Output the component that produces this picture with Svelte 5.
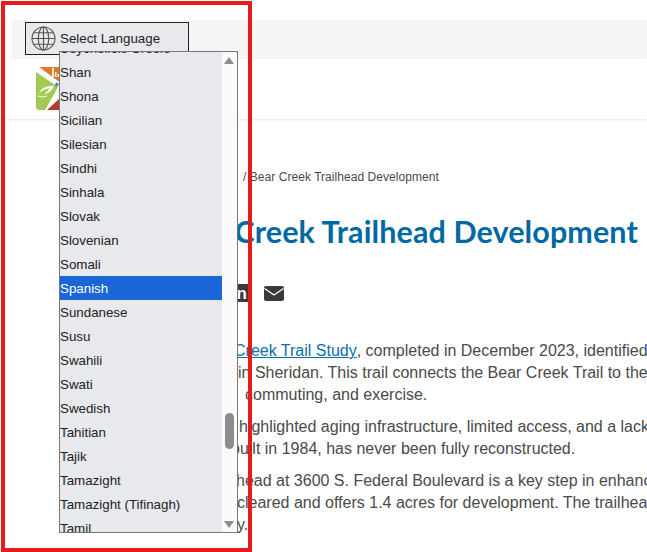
<script lang="ts">
  const languages = [
    'Seychellois Creole', 'Shan', 'Shona', 'Sicilian', 'Silesian', 'Sindhi', 'Sinhala',
    'Slovak', 'Slovenian', 'Somali', 'Spanish', 'Sundanese', 'Susu', 'Swahili', 'Swati',
    'Swedish', 'Tahitian', 'Tajik', 'Tamazight', 'Tamazight (Tifinagh)', 'Tamil'
  ];
  let selected = $state('Spanish');

  // x = where the visible part of the line starts, the lead part runs under the open list
  const contentLeft = 64;
  const paragraphs = [
    [
      { x: 234, lead: 'The Bear ', link: 'Creek Trail Study', text: ', completed in December 2023, identified the need' },
      { x: 238, lead: 'a trailhead ', text: 'in Sheridan. This trail connects the Bear Creek Trail to the regional network' },
      { x: 245, lead: '', text: 'commuting, and exercise.' }
    ],
    [
      { x: 239, lead: 'The study ', text: 'highlighted aging infrastructure, limited access, and a lack of amenities' },
      { x: 231, lead: 'The site, ', text: 'built in 1984, has never been fully reconstructed.' }
    ],
    [
      { x: 236, lead: 'A new trail', text: 'head at 3600 S. Federal Boulevard is a key step in enhancing access' },
      { x: 237, lead: 'The site is ', text: 'cleared and offers 1.4 acres for development. The trailhead will serve' },
      { x: 237, lead: 'communit', text: 'y.' }
    ]
  ];
</script>

<div class="page">
  <div class="topbar">
    <div class="lang">
      <button class="lang-btn">
        <svg class="globe" viewBox="0 0 24 24" width="25" height="25" fill="none" stroke="#555" stroke-width="1.1">
          <circle cx="12" cy="12" r="11" />
          <ellipse cx="12" cy="12" rx="5" ry="11" />
          <path d="M12 1v22M1 12h22M2.6 6.5h18.8M2.6 17.5h18.8" />
        </svg>
        <span>Select Language</span>
      </button>
      <div class="dropdown">
        <ul class="options">
          {#each languages as lang}
            <li class:active={lang === selected}>{lang}</li>
          {/each}
        </ul>
        <div class="scrollbar">
          <span class="arrow up"></span>
          <span class="thumb"></span>
          <span class="arrow down"></span>
        </div>
      </div>
    </div>
  </div>

  <header class="site-header">
    <svg class="logo" viewBox="0 0 30 43" width="30" height="43">
      <path d="M3 0H30V20Z" fill="#e07b2c" />
      <path d="M16 1h2v9h-2zM19 5h1.500v5H19zM21.500 7H23v3h-1.500z" fill="#fff" opacity="0.85" />
      <path d="M0 5L22 20 9 43H3Q0 43 0 40Z" fill="#a3c854" />
      <path d="M20 15l3 2-2 3-2-2z" fill="#2f8fc4" />
      <path d="M11 43L23 32 30 38V43Z" fill="#b8392e" />
      <path d="M3 26Q7 18 18 19 15 26 8 27 12 24 14 21 8 22 3 26Z" fill="#fff" />
      <path d="M2 29Q6 31 11 29" fill="none" stroke="#fff" stroke-width="1" />
    </svg>
  </header>

  <main class="content">
    <div class="crumb">
      <span class="crumb-lead">Projects</span>/ Bear Creek Trailhead Development
    </div>
    <h1><span class="h1-lead">Bear </span>Creek Trailhead Development</h1>
    <div class="share">
      <span class="share-in">in</span>
      <svg viewBox="0 0 20 15" width="20" height="15">
        <rect width="20" height="15" rx="2" fill="#3a3a3a" />
        <path d="M0.5 2.500L10 9l9.500-6.500" fill="none" stroke="#fff" stroke-width="1.300" />
      </svg>
    </div>
    <div class="body-text">
      {#each paragraphs as lines}
        <div class="para">
          {#each lines as line}
            <div class="line">
              <span class="lead" style="width: {line.x - contentLeft}px">{line.lead}</span>
              {#if line.link}<a href="#study">{line.link}</a>{/if}<span>{line.text}</span>
            </div>
          {/each}
        </div>
      {/each}
    </div>
  </main>

  <div class="annotation"></div>
</div>

<style>
  :global(body) {
    margin: 0;
    background: #fff;
  }

  .page {
    position: relative;
    height: 552px;
    overflow: hidden;
    font-family: "Liberation Sans", Arial, sans-serif;
    color: #4a4a4a;
  }

  .topbar {
    margin: 20px 0 0 12px;
    height: 39px;
    padding: 2px 0 0 13px;
    box-sizing: border-box;
    background: #f5f5f5;
  }

  .lang {
    position: relative;
    width: 164px;
  }

  .lang-btn {
    display: flex;
    align-items: center;
    gap: 4px;
    width: 164px;
    height: 33px;
    padding: 0 0 0 5px;
    box-sizing: border-box;
    border: 1.5px solid #222;
    background: #e8e9ed;
    color: #222;
    font: 13.333px "Liberation Sans", Arial, sans-serif;
  }

  .globe {
    flex-shrink: 0;
  }

  .dropdown {
    position: absolute;
    left: 34px;
    top: 29px;
    z-index: 2;
    display: flex;
    width: 179px;
    height: 482px;
    box-sizing: border-box;
    border: 1px solid #777;
    overflow: hidden;
    background: #e8e9ed;
  }

  .options {
    flex: 1;
    margin: -16px 0 0;
    padding: 0;
    list-style: none;
    color: #222;
    font-size: 13.333px;
    line-height: 26px;
  }

  .options li {
    height: 24px;
    white-space: nowrap;
  }

  .options li.active {
    background: #1a66d6;
    color: #fff;
  }

  .scrollbar {
    position: relative;
    flex: 0 0 15px;
    background: #fafafa;
  }

  .arrow {
    position: absolute;
    left: 2px;
    border-left: 5px solid transparent;
    border-right: 5px solid transparent;
  }

  .arrow.up {
    top: 5px;
    border-bottom: 7px solid #8c8c8c;
  }

  .arrow.down {
    bottom: 4px;
    border-top: 7px solid #8c8c8c;
  }

  .thumb {
    position: absolute;
    left: 3px;
    top: 361px;
    width: 9px;
    height: 36px;
    border-radius: 5px;
    background: #8c8c8c;
  }

  .site-header {
    height: 60px;
    padding: 8px 0 0 36px;
    box-sizing: border-box;
    box-shadow: 0 1px 3px rgba(0, 0, 0, 0.1);
  }

  .logo {
    display: block;
  }

  .content {
    padding-left: 64px;
    white-space: nowrap;
  }

  .crumb {
    display: flex;
    margin-top: 51px;
    font-size: 12px;
    letter-spacing: 0.05px;
    line-height: 14px;
    white-space: pre;
  }

  .crumb-lead {
    width: 179px;
  }

  h1 {
    display: flex;
    margin: 29px 0 0;
    color: #0069a3;
    font-family: Lato, sans-serif;
    font-size: 30.5px;
    font-weight: 700;
    letter-spacing: 0.1px;
    line-height: 36px;
    white-space: pre;
  }

  .h1-lead {
    width: 170.500px;
    text-align: right;
  }

  .share {
    display: flex;
    align-items: center;
    gap: 15px;
    margin: 35px 0 0 166px;
    height: 18px;
  }

  .share-in {
    width: 17px;
    height: 18px;
    padding-right: 2px;
    background: #3a3a3a;
    color: #fff;
    font-weight: 700;
    font-size: 17px;
    line-height: 19px;
    text-align: right;
    overflow: hidden;
  }

  .body-text {
    margin-top: 38px;
    font-size: 16px;
    line-height: 22px;
  }

  .para {
    margin-bottom: 10px;
  }

  .line {
    display: flex;
    height: 22px;
    white-space: pre;
  }

  .lead {
    flex-shrink: 0;
    text-align: right;
  }

  a {
    color: #0a6ea8;
    text-decoration: underline;
  }

  .annotation {
    position: absolute;
    left: 1px;
    top: 1px;
    width: 251px;
    height: 551px;
    box-sizing: border-box;
    border: 4px solid #e61b1b;
    z-index: 3;
    pointer-events: none;
  }
</style>
